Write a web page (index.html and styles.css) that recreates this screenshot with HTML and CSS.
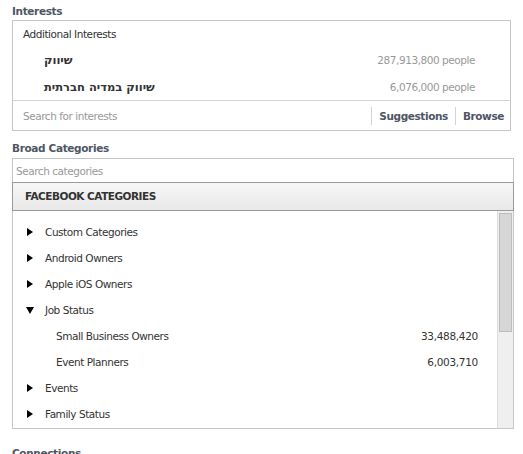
FILE: index.html
```html
<!DOCTYPE html>
<html>
<head>
<meta charset="utf-8">
<link rel="stylesheet" href="styles.css">
</head>
<body>
<div class="page">
  <h3 class="heading">Interests</h3>
  <div class="interests">
    <div class="add-title">Additional Interests</div>
    <div class="irow"><span class="iname">שיווק</span><span class="icount">287,913,800 people</span></div>
    <div class="irow"><span class="iname">שיווק במדיה חברתית</span><span class="icount">6,076,000 people</span></div>
    <div class="isearch">
      <span class="placeholder">Search for interests</span>
      <span class="links"><span class="sep"></span><a class="lnk">Suggestions</a><span class="sep"></span><a class="lnk">Browse</a></span>
    </div>
  </div>

  <h3 class="heading heading2">Broad Categories</h3>
  <div class="cats">
    <div class="csearch">Search categories</div>
    <div class="chead">FACEBOOK CATEGORIES</div>
    <div class="clist">
      <div class="items">
        <div class="crow"><span class="tri right"></span><span>Custom Categories</span></div>
        <div class="crow"><span class="tri right"></span><span>Android Owners</span></div>
        <div class="crow"><span class="tri right"></span><span>Apple iOS Owners</span></div>
        <div class="crow"><span class="tri down"></span><span>Job Status</span></div>
        <div class="crow sub"><span>Small Business Owners</span><span class="ccount">33,488,420</span></div>
        <div class="crow sub"><span>Event Planners</span><span class="ccount">6,003,710</span></div>
        <div class="crow"><span class="tri right"></span><span>Events</span></div>
        <div class="crow"><span class="tri right"></span><span>Family Status</span></div>
      </div>
      <div class="scroll"><div class="thumb"></div></div>
    </div>
  </div>

  <h3 class="heading heading3">Connections</h3>
</div>
</body>
</html>
```
FILE: styles.css
```css
html, body {
  margin: 0;
  padding: 0;
  background: #fff;
  overflow: hidden;
}
body {
  font-family: "DejaVu Sans", Tahoma, sans-serif;
  font-size: 10.5px;
  color: #333;
}
.page {
  width: 506px;
  padding: 4px 7px 0 12px;
  border-right: 1px solid #e2e2e2;
  height: 600px;
  box-sizing: content-box;
}
.heading {
  margin: 0;
  font-size: 10.5px;
  line-height: 15px;
  height: 16px;
  font-weight: bold;
  color: #4e5665;
  letter-spacing: -0.35px;
}
.heading2 { margin-top: 10px; height: 17px; }
.heading3 { margin-top: 17px; }

.interests {
  width: 497px;
  border: 1px solid #c6c6c6;
}
.add-title {
  height: 25px;
  line-height: 26px;
  padding-left: 10px;
  letter-spacing: -0.45px;
}
.irow {
  height: 27px;
  display: flex;
  align-items: center;
  justify-content: space-between;
  padding: 0 35px 0 31px;
}
.iname {
  font-weight: bold;
  font-size: 11.5px;
  color: #333;
}
.icount {
  color: #999;
  letter-spacing: -0.45px;
}
.isearch {
  border-top: 1px solid #d4d4d4;
  height: 29px;
  display: flex;
  align-items: center;
  justify-content: space-between;
  padding: 0 6px 0 10px;
}
.placeholder {
  color: #999;
  letter-spacing: -0.45px;
}
.links {
  display: flex;
  align-items: center;
}
.sep {
  width: 1px;
  height: 18px;
  background: #d4d4d4;
}
.lnk {
  font-weight: bold;
  color: #4e5665;
  padding: 0 7px;
  letter-spacing: -0.4px;
}
.links .lnk:last-child { padding-right: 0; }

.cats {
  width: 502px;
}
.csearch {
  height: 23px;
  line-height: 24px;
  border: 1px solid #c6c6c6;
  border-bottom: none;
  padding-left: 3px;
  color: #999;
  letter-spacing: -0.45px;
}
.chead {
  height: 27px;
  line-height: 27px;
  border: 1px solid #9a9a9a;
  background: linear-gradient(#f7f7f7, #e8e8e8);
  padding-left: 12px;
  font-weight: bold;
  color: #333;
  letter-spacing: -0.5px;
}
.clist {
  display: flex;
  border: 1px solid #c6c6c6;
  border-top: none;
  height: 217px;
}
.items {
  flex: 1;
  padding-top: 8px;
}
.crow {
  height: 26px;
  display: flex;
  align-items: center;
  padding-left: 13px;
  padding-right: 19px;
  letter-spacing: -0.45px;
}
.crow.sub {
  padding-left: 43px;
  justify-content: space-between;
}
.ccount { letter-spacing: -0.3px; }
.tri {
  width: 0;
  height: 0;
  margin-right: 12px;
  margin-left: 1px;
}
.tri.right {
  border-top: 4.5px solid transparent;
  border-bottom: 4.5px solid transparent;
  border-left: 6px solid #000;
}
.tri.down {
  border-left: 4px solid transparent;
  border-right: 4px solid transparent;
  border-top: 7px solid #000;
  margin-left: 0;
  margin-right: 11px;
}
.scroll {
  width: 13px;
  background: #efefef;
  border-left: 1px solid #dcdcdc;
  padding: 2px 1px 0 1px;
}
.thumb {
  height: 119px;
  background: #d6d6d6;
  border: 1px solid #bdbdbd;
  box-sizing: border-box;
}
```
